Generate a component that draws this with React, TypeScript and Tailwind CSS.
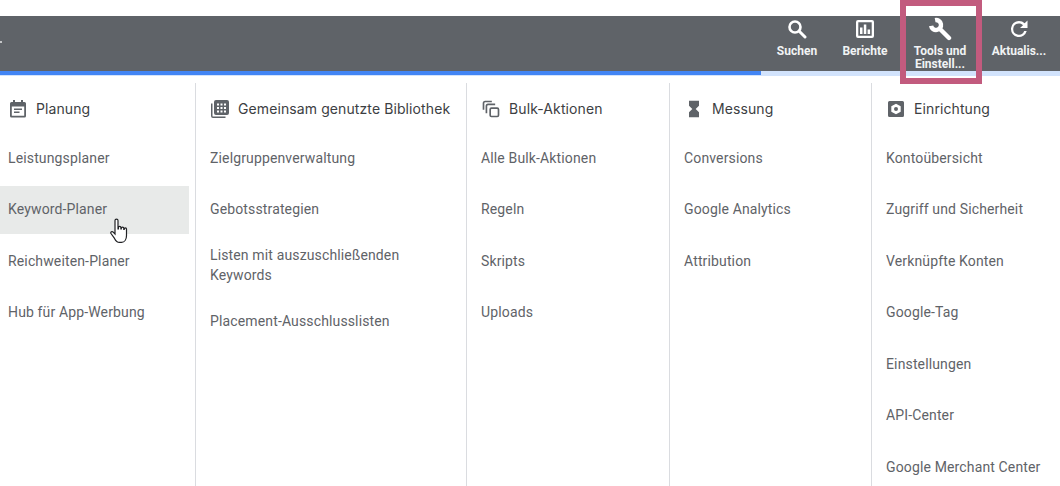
import type { ReactNode } from "react";

function CalendarIcon() {
  return (
    <svg viewBox="0 0 18 18" className="h-[18px] w-[18px] fill-[#5f6368]">
      <path d="M4 0h2v2h6V0h2v2h1.500A1.500 1.500 0 0 1 17 3.500v12.500a1.500 1.500 0 0 1-1.500 1.500h-13A1.500 1.500 0 0 1 1 16V3.500A1.500 1.500 0 0 1 2.500 2H4V0zM2.800 6.500V15.700h12.400V6.500H2.800zM5 8.500h8V10H5V8.500zm0 3h5.500V13H5v-1.500z" fillRule="evenodd" />
    </svg>
  );
}

function LibraryIcon() {
  return (
    <svg viewBox="0 0 20 20" className="h-[20px] w-[20px] fill-[#5f6368]">
      <path fillRule="evenodd" d="M2.500 4.500H1v12.500A2 2 0 0 0 3 19h12.500v-1.500H3a.5.5 0 0 1-.5-.5V4.500zM6 1h11a2 2 0 0 1 2 2v11a2 2 0 0 1-2 2H6a2 2 0 0 1-2-2V3a2 2 0 0 1 2-2zm1 3.500v2h2v-2H7zm3.500 0v2h2v-2h-2zm3.500 0v2h2v-2h-2zM7 8v2h2V8H7zm3.500 0v2h2V8h-2zM14 8v2h2V8h-2zM7 11.500v2h2v-2H7zm3.500 0v2h2v-2h-2zm3.500 0v2h2v-2h-2z" />
    </svg>
  );
}

function BulkIcon() {
  return (
    <svg viewBox="0 0 24 24" className="h-[20px] w-[20px] fill-none stroke-[#5f6368] stroke-2">
      <path d="M3 13V5a2 2 0 0 1 2-2h8" />
      <path d="M6.500 17V8.500a2 2 0 0 1 2-2H17" />
      <rect x="11" y="11" width="10" height="10" rx="1.500" />
    </svg>
  );
}

function HourglassIcon() {
  return (
    <svg viewBox="0 0 24 24" className="h-[20px] w-[20px] fill-[#5f6368]">
      <path d="M6 2h12v6l-4 4 4 4v6H6v-6l4-4-4-4V2z" />
    </svg>
  );
}

function SetupIcon() {
  return (
    <svg viewBox="0 0 18 18" className="h-[18px] w-[18px] fill-[#5f6368]">
      <path fillRule="evenodd" d="M2.500 1h13A1.500 1.500 0 0 1 17 2.500v13a1.500 1.500 0 0 1-1.500 1.500h-13A1.500 1.500 0 0 1 1 15.500v-13A1.500 1.500 0 0 1 2.500 1zM9 3.700L4.300 6.300v5.400L9 14.300l4.700-2.600V6.300L9 3.700zM9 7a2 2 0 1 1 0 4 2 2 0 0 1 0-4z" />
    </svg>
  );
}

function HeaderAction({ icon, label, w }: { icon: ReactNode; label: ReactNode; w: string }) {
  return (
    <div className={`flex flex-col items-center ${w}`}>
      <div className="flex h-[24px] items-center justify-center">{icon}</div>
      <div className="mt-[4px] text-center text-[12px] leading-[13px] font-bold text-[#f1f3f4]">{label}</div>
    </div>
  );
}

function Column({
  icon,
  title,
  items,
  w,
  pl,
  pr,
  hovered,
}: {
  icon: ReactNode;
  title: string;
  items: string[];
  w: string;
  pl: string;
  pr?: string;
  hovered?: string;
}) {
  return (
    <div className={`flex h-full shrink-0 flex-col border-[#dadce0] not-last:border-r ${w}`}>
      <div className={`flex h-[49px] shrink-0 items-center gap-[8px] pt-[2px] ${pl}`}>
        <div className="flex w-[20px] justify-center">{icon}</div>
        <span className="font-['Inter',sans-serif] text-[14px] tracking-[0.1px] text-[#3c4043]">{title}</span>
      </div>
      <div className="flex flex-col">
        {items.map((item) => (
          <div
            key={item}
            className={`relative flex min-h-[51.5px] shrink-0 items-center py-[10px] text-[14px] leading-[20px] tracking-[0.14px] text-[#5f6368] ${pl} ${pr ?? ""}`}
          >
            {item === hovered && <div className="absolute top-[2.5px] right-[6px] bottom-[1px] left-0 bg-[#e8eae9]" />}
            <span className="relative">{item}</span>
          </div>
        ))}
      </div>
    </div>
  );
}

export default function App() {
  return (
    <div className="relative h-[486px] w-[1060px] overflow-hidden bg-white font-['Roboto','Liberation_Sans',sans-serif]">
      <div className="h-[16px]" />
      <div className="relative flex h-[55px] items-start justify-end bg-[#5f6368] pt-[1px] pr-[13px]">
        {/* tip of the collapsed menu arrow, cut off by the crop */}
        <div className="absolute top-[25px] left-0 h-[2px] w-[2px] bg-[#c4c6c8]" />
        <HeaderAction
          w="w-[56px]"
          label="Suchen"
          icon={
            <svg viewBox="0 0 20 20" className="h-[20px] w-[20px] fill-none stroke-white">
              <circle cx="8" cy="8" r="5.500" strokeWidth="2.600" />
              <path d="M12.500 12.500L18 18" strokeWidth="3" strokeLinecap="round" />
            </svg>
          }
        />
        <HeaderAction
          w="ml-[12px] w-[56px]"
          label="Berichte"
          icon={
            <svg viewBox="0 0 20 20" className="h-[20px] w-[20px] fill-white">
              <path fillRule="evenodd" d="M3 1h14a2 2 0 0 1 2 2v14a2 2 0 0 1-2 2H3a2 2 0 0 1-2-2V3a2 2 0 0 1 2-2zm.3 2.300v13.400h13.400V3.300H3.300zM5 8.500h2.500V15H5V8.500zM8.800 5.500h2.500V15H8.800V5.500zM12.600 10.500h2.500V15h-2.500v-4.500z" />
            </svg>
          }
        />
        <HeaderAction
          w="ml-[15px] w-[64px]"
          label={
            <>
              Tools und
              <br />
              Einstell...
            </>
          }
          icon={
            <svg viewBox="0 0 24 24" className="h-[24px] w-[24px] fill-none stroke-white">
              <path d="M7.100 3.100A5 5 0 1 1 3.100 8.900" strokeWidth="4.400" />
              <path d="M12 12L21 21" strokeWidth="4.400" strokeLinecap="round" />
            </svg>
          }
        />
        <HeaderAction
          w="ml-[19px] w-[56px]"
          label="Aktualis..."
          icon={
            <svg viewBox="0 0 24 24" className="h-[24px] w-[24px] fill-white">
              <path d="M17.650 6.350A7.960 7.960 0 0 0 12 4a8 8 0 1 0 7.730 10h-2.600A5.600 5.600 0 1 1 12 6.500c1.600 0 3 .6 4 1.700L13 11h7.500V3.500l-2.850 2.850z" />
            </svg>
          }
        />
      </div>
      <div className="h-[5px] bg-[#d2e3fc]">
        <div className="h-[4px] w-[761px] bg-[#4285f4]" />
      </div>

      <div className="mt-[7px] flex h-[403px]">
        <Column
          w="w-[196px]"
          pl="pl-[8px]"
          icon={<CalendarIcon />}
          title="Planung"
          hovered="Keyword-Planer"
          items={["Leistungsplaner", "Keyword-Planer", "Reichweiten-Planer", "Hub für App-Werbung"]}
        />
        <Column
          w="w-[271px]"
          pl="pl-[14px]"
          pr="pr-[30px]"
          icon={<LibraryIcon />}
          title="Gemeinsam genutzte Bibliothek"
          items={[
            "Zielgruppenverwaltung",
            "Gebotsstrategien",
            "Listen mit auszuschließenden Keywords",
            "Placement-Ausschlusslisten",
          ]}
        />
        <Column
          w="w-[203px]"
          pl="pl-[14px]"
          icon={<BulkIcon />}
          title="Bulk-Aktionen"
          items={["Alle Bulk-Aktionen", "Regeln", "Skripts", "Uploads"]}
        />
        <Column
          w="w-[202px]"
          pl="pl-[14px]"
          icon={<HourglassIcon />}
          title="Messung"
          items={["Conversions", "Google Analytics", "Attribution"]}
        />
        <Column
          w="w-[188px]"
          pl="pl-[14px]"
          icon={<SetupIcon />}
          title="Einrichtung"
          items={[
            "Kontoübersicht",
            "Zugriff und Sicherheit",
            "Verknüpfte Konten",
            "Google-Tag",
            "Einstellungen",
            "API-Center",
            "Google Merchant Center",
          ]}
        />
      </div>

      {/* callout round the tools button */}
      <div className="absolute top-0 left-[900px] h-[84px] w-[82px] border-[6px] border-[#c25b7e]" />

      {/* pointer */}
      <svg viewBox="0 0 20 27" className="absolute top-[218px] left-[110px] h-[27px] w-[20px]">
        <path
          d="M5 2.500c0-1.800 3-1.800 3 0V11h.4V9.500c0-1.500 2.500-1.500 2.500 0V11h.4v-.7c0-1.500 2.500-1.500 2.500 0v1.200h.4v-.5c0-1.400 2.300-1.400 2.300 0v6.500c0 3.500-1.700 6.900-5 6.900H9.500c-2.500 0-4-2-5-4L1 15.500c-.8-1.500 1-2.700 2.200-1.400L5 16V2.500z"
          fill="#fff"
          stroke="#202124"
          strokeWidth="1.200"
        />
      </svg>
    </div>
  );
}
